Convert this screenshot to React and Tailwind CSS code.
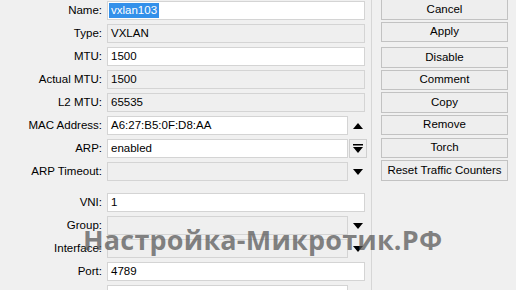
import React from "react";

function Down() {
  return (
    <svg width="10" height="6" viewBox="0 0 10 6" className="block">
      <polygon points="0,0 10,0 5,6" fill="#000" />
    </svg>
  );
}
function Up() {
  return (
    <svg width="10" height="6" viewBox="0 0 10 6" className="block">
      <polygon points="0,6 10,6 5,0" fill="#000" />
    </svg>
  );
}
function BarDown() {
  return (
    <svg width="10" height="9" viewBox="0 0 10 9" className="block">
      <rect x="0" y="0" width="10" height="1.5" fill="#000" />
      <polygon points="0,3 10,3 5,9" fill="#000" />
    </svg>
  );
}

function Field({ value, white, arrow, children }) {
  const bg = white ? "bg-white" : "bg-[#efefef]";
  return (
    <div className="flex items-center">
      <div
        className={`h-[19px] border border-[#d4d4d4] ${bg} flex items-center pl-[1px] ${
          arrow ? "w-[241px]" : "w-[258px]"
        }`}
      >
        {children ? children : <span className="px-[2px]">{value}</span>}
      </div>
      {arrow === "up" && (
        <div className="w-[17px] flex justify-center ml-[1px]">
          <Up />
        </div>
      )}
      {arrow === "down" && (
        <div className="w-[17px] flex justify-center ml-[1px]">
          <Down />
        </div>
      )}
      {arrow === "bar" && (
        <div className="w-[18px] h-[19px] ml-[1px] border border-[#cfcfcf] flex items-center justify-center">
          <BarDown />
        </div>
      )}
    </div>
  );
}

function Row({ label, ...rest }) {
  return (
    <div className="flex items-center h-[19px]">
      <div className="w-[102px] text-right whitespace-nowrap">{label}</div>
      <div className="ml-[5px]">
        <Field {...rest} />
      </div>
    </div>
  );
}

function Btn({ children }) {
  return (
    <div className="h-[20.5px] w-[127px] border border-[#c2c2c2] bg-[#eeeeee] flex items-center justify-center whitespace-nowrap">
      {children}
    </div>
  );
}

export default function App() {
  return (
    <div className="relative w-[516px] h-[290px] overflow-hidden bg-[#f0f0f0] flex font-['Liberation_Sans',Arial,sans-serif] text-[11.5px] text-black leading-none">
      <div className="w-[372px] h-full border-r border-[#d6d6d6] pt-[1px] flex flex-col">
        <div className="flex flex-col gap-[4px]">
          <Row label="Name:" white>
            <span className="bg-[#3390ea] text-white h-[15px] flex items-center px-[2px]">vxlan103</span>
          </Row>
          <Row label="Type:" value="VXLAN" />
          <Row label="MTU:" value="1500" white />
          <Row label="Actual MTU:" value="1500" />
          <Row label="L2 MTU:" value="65535" />
          <Row label="MAC Address:" value="A6:27:B5:0F:D8:AA" white arrow="up" />
          <Row label="ARP:" value="enabled" white arrow="bar" />
          <Row label="ARP Timeout:" value="" arrow="down" />
        </div>
        <div className="ml-[8px] w-[357px] h-[1px] bg-[#d6d6d6] mt-[6px] mb-[6px]" />
        <div className="flex flex-col gap-[4px]">
          <Row label="VNI:" value="1" white />
          <Row label="Group:" value="" arrow="down" />
          <Row label="Interface:" value="" arrow="down" />
          <Row label="Port:" value="4789" white />
          <Row label="" value="" white arrow="down" />
        </div>
      </div>
      <div className="ml-[9px] mt-[-1px] flex flex-col gap-[2.1px]">
        <Btn>Cancel</Btn>
        <Btn>Apply</Btn>
        <div className="mt-[3px]">
          <Btn>Disable</Btn>
        </div>
        <Btn>Comment</Btn>
        <Btn>Copy</Btn>
        <Btn>Remove</Btn>
        <Btn>Torch</Btn>
        <Btn>Reset Traffic Counters</Btn>
      </div>
      <div className="absolute left-[83px] top-[226px] font-['Open_Sans',sans-serif] font-bold text-[27px] tracking-[0.2px] leading-none text-[rgba(85,85,85,0.72)] whitespace-nowrap pointer-events-none">
        Настройка-Микротик.РФ
      </div>
    </div>
  );
}
